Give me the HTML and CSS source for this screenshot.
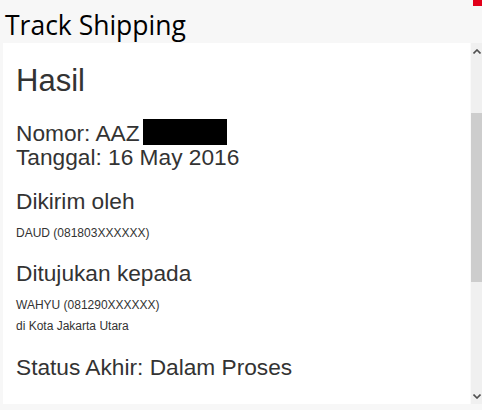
FILE: index.html
```html
<!DOCTYPE html>
<html>
<head>
<meta charset="utf-8">
<link rel="stylesheet" href="styles.css">
</head>
<body>
<div class="topbar">
  <h1 class="title">Track Shipping</h1>
  <span class="corner"></span>
</div>
<div class="main">
  <div class="panel">
    <h2 class="heading">Hasil</h2>
    <p class="big first">Nomor: AAZ<span class="redact"></span></p>
    <p class="big">Tanggal: 16 May 2016</p>
    <p class="big label">Dikirim oleh</p>
    <p class="small">DAUD (081803XXXXXX)</p>
    <p class="big label2">Ditujukan kepada</p>
    <p class="small">WAHYU (081290XXXXXX)</p>
    <p class="small">di Kota Jakarta Utara</p>
    <p class="big status">Status Akhir: Dalam Proses</p>
  </div>
  <div class="scrollbar">
    <div class="arrow">
      <svg width="8" height="5" viewBox="0 0 8 5"><path d="M0.5 4.5 L4 1 L7.5 4.5" fill="none" stroke="#505050" stroke-width="1.6"/></svg>
    </div>
    <div class="gap-top"></div>
    <div class="thumb"></div>
    <div class="gap-bottom"></div>
    <div class="arrow">
      <svg width="8" height="5" viewBox="0 0 8 5"><path d="M0.5 0.5 L4 4 L7.5 0.5" fill="none" stroke="#505050" stroke-width="1.6"/></svg>
    </div>
  </div>
</div>
</body>
</html>
```
FILE: styles.css
```css
html, body {
  margin: 0;
  padding: 0;
}
body {
  width: 482px;
  height: 410px;
  overflow: hidden;
  background: #f7f7f7;
  font-family: "Liberation Sans", Arial, sans-serif;
  color: #333;
}
.topbar {
  position: relative;
  height: 43px;
}
.title {
  margin: 0;
  padding: 8px 0 0 5px;
  font-family: "Open Sans", "Noto Sans", sans-serif;
  font-weight: 400;
  font-size: 26.5px;
  line-height: 34px;
  color: #000;
}
.corner {
  position: absolute;
  top: 0;
  right: 0;
  width: 9px;
  height: 6px;
  background: #e2001a;
}
.main {
  display: flex;
  height: 361px;
  margin-left: 3px;
}
.panel {
  flex: 1;
  background: #fff;
  padding: 20px 0 0 13px;
  border-right: 1px solid #fafafa;
}
.heading {
  margin: 0;
  font-weight: 400;
  font-size: 31px;
  line-height: 36px;
}
p {
  margin: 0;
}
.big {
  font-size: 22.7px;
  line-height: 24px;
}
.first {
  margin-top: 20px;
}
.label {
  margin-top: 20px;
}
.label2 {
  margin-top: 17px;
}
.small {
  font-size: 12px;
  line-height: 21px;
}
.label + .small, .label2 + .small {
  margin-top: 10px;
}
.status {
  margin-top: 18px;
}
.redact {
  display: inline-block;
  width: 84px;
  height: 26px;
  background: #000;
  vertical-align: -4px;
  margin-left: 3px;
}
.scrollbar {
  width: 11px;
  background: #f0f0f0;
  display: flex;
  flex-direction: column;
}
.arrow {
  height: 16px;
  display: flex;
  align-items: center;
  justify-content: center;
}
.gap-top {
  height: 54px;
}
.thumb {
  height: 169px;
  background: #cdcdcd;
}
.gap-bottom {
  flex: 1;
}
```
